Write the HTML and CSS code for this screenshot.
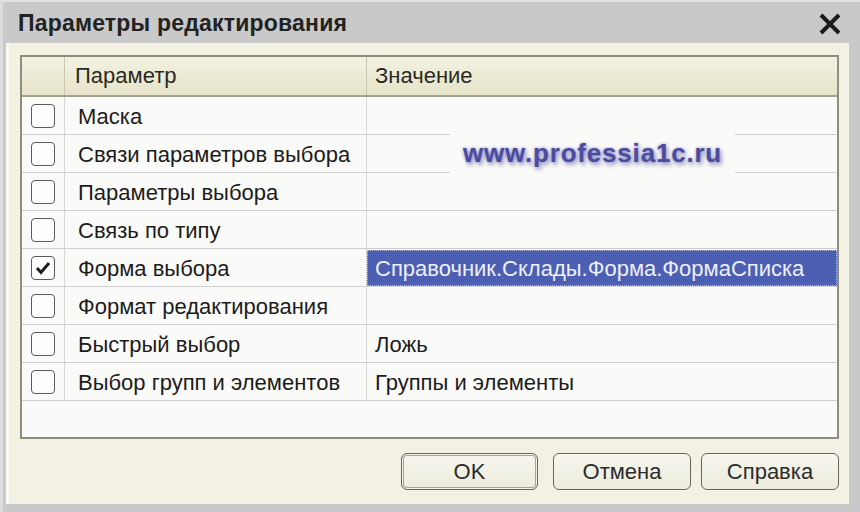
FILE: index.html
```html
<!DOCTYPE html>
<html lang="ru">
<head>
<meta charset="utf-8">
<title>Параметры редактирования</title>
<link rel="stylesheet" href="styles.css">
</head>
<body>
<div class="window">
  <div class="titlebar">
    <span class="title">Параметры редактирования</span>
    <svg class="close" width="24" height="22" viewBox="0 0 24 22"><path d="M3 2 L21 20 M21 2 L3 20" stroke="#1b1b1b" stroke-width="4" stroke-linecap="butt"/></svg>
  </div>
  <div class="body">
    <div class="grid">
      <div class="row head">
        <div class="cell chk"></div>
        <div class="cell name">Параметр</div>
        <div class="cell val">Значение</div>
      </div>
      <div class="row"><div class="cell chk"><span class="box"></span></div><div class="cell name">Маска</div><div class="cell val"></div></div>
      <div class="row"><div class="cell chk"><span class="box"></span></div><div class="cell name">Связи параметров выбора</div><div class="cell val"></div></div>
      <div class="row"><div class="cell chk"><span class="box"></span></div><div class="cell name">Параметры выбора</div><div class="cell val"></div></div>
      <div class="row"><div class="cell chk"><span class="box"></span></div><div class="cell name">Связь по типу</div><div class="cell val"></div></div>
      <div class="row"><div class="cell chk"><span class="box"><svg width="16" height="14" viewBox="0 0 16 14"><path d="M2 7 L6 11.5 L14 2" fill="none" stroke="#1e1e1e" stroke-width="3"/></svg></span></div><div class="cell name">Форма выбора</div><div class="cell val"><span class="selected">Справочник.Склады.Форма.ФормаСписка</span></div></div>
      <div class="row"><div class="cell chk"><span class="box"></span></div><div class="cell name">Формат редактирования</div><div class="cell val"></div></div>
      <div class="row"><div class="cell chk"><span class="box"></span></div><div class="cell name">Быстрый выбор</div><div class="cell val">Ложь</div></div>
      <div class="row"><div class="cell chk"><span class="box"></span></div><div class="cell name">Выбор групп и элементов</div><div class="cell val">Группы и элементы</div></div>
      <div class="filler"></div>
      <div class="watermark">www.professia1c.ru</div>
    </div>
    <div class="buttons">
      <button class="btn default">OK</button>
      <button class="btn cancel">Отмена</button>
      <button class="btn">Справка</button>
    </div>
  </div>
</div>
</body>
</html>
```
FILE: styles.css
```css
html, body {
  margin: 0;
  padding: 0;
  background: #c8c8c8;
}
.window {
  width: 860px;
  height: 512px;
  box-sizing: border-box;
  background: #c9c9c9;
  border-top: 2px solid #e2e2e2;
  border-left: 3px solid #dcdcdc;
  padding: 0 11px 8px 3px;
  display: flex;
  flex-direction: column;
  font-family: "Liberation Sans", Arial, sans-serif;
  color: #1c1c1c;
}
.titlebar {
  height: 41px;
  flex: none;
  display: flex;
  align-items: center;
  justify-content: space-between;
  padding: 0 7px 0 12px;
}
.title {
  font-size: 23px;
  font-weight: bold;
  color: #222;
  letter-spacing: 0.2px;
  margin-top: 2px;
}
.close {
  margin-top: 2px;
}
.body {
  flex: 1;
  background: #f2f1e3;
  border-left: 3px solid #fbfbf6;
  padding: 12px 10px 0 11px;
  display: flex;
  flex-direction: column;
}
.grid {
  position: relative;
  height: 384px;
  box-sizing: border-box;
  border: 2px solid #8e8e7c;
  background: #fafaf8;
  display: flex;
  flex-direction: column;
}
.row {
  display: grid;
  grid-template-columns: 43px 302px 1fr;
  height: 38px;
  border-bottom: 1px solid #cfcfcf;
  box-sizing: border-box;
}
.row.head {
  height: 40px;
  background: linear-gradient(#f3f2e3, #ebe9d2 60%, #e6e4c9);
  border-bottom: 2px solid #a2a290;
}
.cell {
  display: flex;
  align-items: center;
  font-size: 22px;
  white-space: nowrap;
  border-right: 1px solid #d6d6d2;
  padding-top: 2px;
}
.cell.val { border-right: none; }
.head .cell { border-right-color: #c9c7b2; color: #2a2a22; padding-top: 0; }
.cell.chk { justify-content: center; padding-top: 0; }
.cell.name { padding-left: 13px; }
.head .cell.name { padding-left: 10px; }
.cell.val { padding-left: 8px; }
.box {
  width: 22px;
  height: 22px;
  border: 1px solid #5a5a5a;
  border-radius: 4px;
  background: #fdfdfd;
  display: flex;
  align-items: center;
  justify-content: center;
  margin-right: 1px;
}
.cell.val:has(.selected) { padding: 0; }
.selected {
  display: flex;
  align-items: center;
  width: 100%;
  height: 36px;
  box-sizing: border-box;
  background: #4d5fb3;
  border: 1px dotted #b8c0e6;
  color: #eef0fa;
  padding-left: 7px;
  padding-top: 2px;
}
.filler { flex: 1; }
.watermark {
  position: absolute;
  left: 428px;
  top: 76px;
  width: 285px;
  height: 40px;
  background: #fafaf8;
  display: flex;
  align-items: center;
  justify-content: center;
  font-size: 26px;
  font-weight: bold;
  letter-spacing: 0.8px;
  color: #4b4c9e;
  text-shadow: 0 0 3px rgba(110, 110, 200, 0.7), 2px 3px 4px rgba(60, 60, 140, 0.5);
}
.buttons {
  display: flex;
  justify-content: flex-end;
  margin-top: 14px;
}
.btn {
  width: 138px;
  height: 37px;
  box-sizing: border-box;
  border: 1px solid #66665a;
  border-radius: 6px;
  background: linear-gradient(#f7f6ee, #ecebdc);
  font-family: "Liberation Sans", Arial, sans-serif;
  font-size: 22px;
  color: #2c2c2c;
  padding: 0;
}
.btn.default {
  width: 137px;
  margin-right: 15px;
  box-shadow: inset 0 0 0 1px #f4f3ea, inset 0 0 0 2px #a6a694;
}
.btn.cancel { margin-right: 10px; }
```
